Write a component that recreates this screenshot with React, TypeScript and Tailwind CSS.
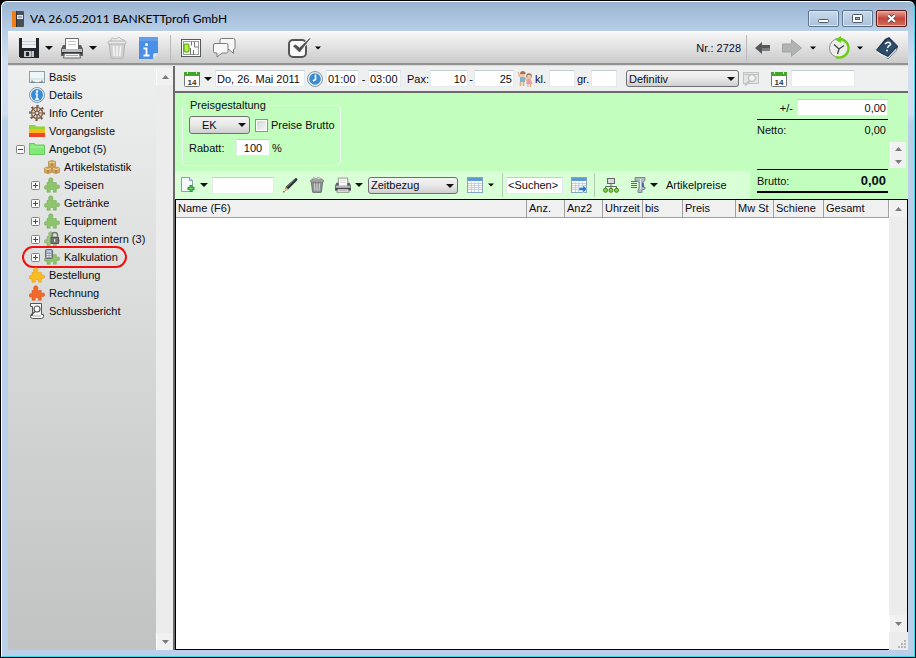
import React from 'react';

interface IconProps {
  className?: string;
}

interface TreeItem {
  label: string;
  icon: React.ReactNode;
  level: number;
  toggle?: 'plus' | 'minus';
  marked?: boolean;
}

const Caret: React.FC<IconProps> = ({ className = '' }) => (
  <svg className={`w-2 h-1 shrink-0 ${className}`} viewBox="0 0 8 4" aria-hidden="true">
    <path d="M0 0h8L4 4z" fill="#111" />
  </svg>
);

const SmallCaret: React.FC<IconProps> = ({ className = '' }) => (
  <svg className={`w-1.5 h-1 shrink-0 ${className}`} viewBox="0 0 6 4" aria-hidden="true">
    <path d="M0 .5h6L3 3.500z" fill="#000" />
  </svg>
);

const AppIcon = () => (
  <svg className="w-3 h-4 shrink-0" viewBox="0 0 12 16">
    <rect width="12" height="16" rx="1" fill="#4b4f55" />
    <rect width="4" height="16" fill="#f07d1a" />
    <rect x="4" width="1" height="16" fill="#2f3135" />
    <rect x="5" y="4" width="6" height="4" fill="#dfe8f2" />
    <path d="M6 6h4" stroke="#5b6b7d" />
  </svg>
);

const SaveIcon = () => (
  <svg className="w-5 h-5 shrink-0" viewBox="0 0 20 20">
    <path d="M0 0h20v20H1.500L0 18.500z" fill="#23272c" />
    <rect x="3" y="0" width="14" height="10" fill="#eef1f4" />
    <path d="M3 3.500h14M3 6.500h14" stroke="#c9ced3" />
    <rect x="5" y="13" width="10" height="6" fill="#c3c7cb" />
    <rect x="7" y="14" width="3" height="4" fill="#23272c" />
    <path d="M12.500 13v6" stroke="#888" />
  </svg>
);

const PrinterIcon: React.FC<IconProps> = ({ className = 'w-[22px] h-[22px]' }) => (
  <svg className={`shrink-0 ${className}`} viewBox="0 0 22 22">
    <path d="M4.500 12V1.500h13V12" fill="#fff" stroke="#6c6c6c" />
    <path d="M7 4.500h8M7 7.500h8" stroke="#c8c8c8" />
    <path d="M2 8h3v4h12V8h3l2 4v7H0v-7z" fill="#5b5f62" />
    <path d="M1 12h20v3H1z" fill="#b9bcbe" />
    <path d="M1 15h20v2H1z" fill="#35383b" />
    <path d="M3.500 16.500h15l1 4.500h-17z" fill="#f1f1f1" stroke="#666" />
    <path d="M5 18.500h12" stroke="#aaa" />
  </svg>
);

const TrashIcon: React.FC<IconProps & { dark?: boolean }> = ({ className = '', dark = false }) => (
  <svg className={`shrink-0 ${className}`} viewBox="0 0 20 22">
    <path d="M3 4l2-3 4 1 3-2 2 2 3 1 1 3z" fill={dark ? '#d5d5d5' : '#ececec'} stroke={dark ? '#888' : '#bbb'} />
    <path d="M2 6h16l-2 15q-6 2-12 0z" fill={dark ? '#8d9092' : '#d2d2d2'} stroke={dark ? '#5e6163' : '#b2b2b2'} />
    <path d="M6.500 9l.7 10M10 9v10M13.500 9l-.7 10" stroke={dark ? '#d4d4d4' : '#f6f6f6'} strokeWidth="1.500" />
    <rect x="1" y="4" width="18" height="3" rx="1.500" fill={dark ? '#b9bbbc' : '#e6e6e6'} stroke={dark ? '#666' : '#b5b5b5'} />
  </svg>
);

const NoteInfoIcon = () => (
  <svg className="w-5 h-[22px] shrink-0" viewBox="0 0 20 22">
    <path d="M0 0h19v16l-5 6H0z" fill="#4a8ee6" />
    <path d="M0 0h19v4H0z" fill="#5f9fee" />
    <path d="M19 16l-5 6 .5-5.500z" fill="#f0f4fa" />
    <circle cx="7.500" cy="7.500" r="1.500" fill="#fff" />
    <path d="M4.500 11.500h3V18M4.500 18.500h6" stroke="#fff" strokeWidth="1.800" fill="none" />
  </svg>
);

const BoardIcon = () => (
  <svg className="w-5 h-[18px] shrink-0" viewBox="0 0 20 18">
    <rect x=".5" y=".5" width="19" height="17" fill="#fff" stroke="#55595a" />
    <rect x="2.500" y="2.500" width="15" height="13" fill="none" stroke="#9a9d9e" />
    <path d="M10.500 2.500v4M13.500 3v5h4M12.500 11v5M9.500 9v7" stroke="#777" fill="none" />
    <rect x="3" y="5" width="5" height="8" rx="1" fill="#b5f04a" stroke="#4f9c08" />
  </svg>
);

const BubblesIcon = () => (
  <svg className="w-[23px] h-5 shrink-0" viewBox="0 0 23 20" fill="#f7f7f7" stroke="#7d7d7d">
    <path d="M8.500.5h12q1.500 0 1.500 1.500v8q0 1.500-1.500 1.500v4L16 11.500H8.500Q7 11.500 7 10V2Q7 .5 8.500.5z" />
    <path d="M2 5.500h11.500q1.500 0 1.500 1.500v6.500q0 1.500-1.500 1.500H9l-5 4v-4H2q-1.500 0-1.500-1.500V7Q.5 5.500 2 5.500z" />
  </svg>
);

const CheckIcon = () => (
  <svg className="w-[23px] h-5 shrink-0" viewBox="0 0 23 20" fill="none">
    <rect x="1" y="2" width="17" height="17" rx="4" fill="#fafafa" stroke="#555" strokeWidth="2" />
    <path d="M22 .5L11.500 14 5.500 8.500l2-1.500 4 3.500z" fill="#505050" stroke="#f4f4f4" strokeWidth="2.400" />
    <path d="M22 .5L11.500 14 5.500 8l2-1 4 3z" fill="#505050" stroke="#505050" strokeWidth=".8" />
  </svg>
);

const BackIcon = () => (
  <svg className="w-[15px] h-3 shrink-0" viewBox="0 0 15 12">
    <path d="M0 6l7-6v3h8v6H7v3z" fill="#55585a" />
    <path d="M7 6h8v3H7z" fill="#7d8082" />
  </svg>
);

const ForwardIcon = () => (
  <svg className="w-5 h-[18px] shrink-0" viewBox="0 0 20 18">
    <path d="M.5 5h9V.8L19.500 9l-10 8.200V13h-9z" fill="#b2b3b4" stroke="#a2a3a4" />
  </svg>
);

const HistoryIcon = () => (
  <svg className="w-[23px] h-[23px] shrink-0" viewBox="0 0 23 23" fill="none">
    <circle cx="11" cy="12" r="9.500" fill="#ededed" stroke="#8d8d8d" />
    <path d="M6 8.500l5 4.500 5-3.500M11 13l-1.500 5" stroke="#444" strokeWidth="1.300" />
    <path d="M12 3a9.300 9.300 0 1 1-4 18" stroke="#6cce16" strokeWidth="2.400" />
    <path d="M7 3.500L13 0v7z" fill="#6cce16" />
  </svg>
);

const HelpBookIcon = () => (
  <svg className="w-[22px] h-[22px] shrink-0" viewBox="0 0 22 22">
    <path d="M0 13L9 2l4-2 9 9-1 4-9 9z" fill="#1b3148" />
    <path d="M1.500 15L12 20l8.500-9v2L12 21.500 1 16z" fill="#e7edf2" />
    <path d="M1 13L12 1l9 8-9.500 10z" fill="#2d4c6a" />
    <path d="M9 7q3-3 5-1 1.500 2-1.500 3L11.500 11" stroke="#fff" strokeWidth="1.500" fill="none" />
    <circle cx="11" cy="13.500" r="1" fill="#fff" />
  </svg>
);

const CalendarIcon = () => (
  <svg className="w-4 h-4 shrink-0" viewBox="0 0 16 16">
    <rect x=".5" y="1.500" width="15" height="14" rx="1" fill="#fff" stroke="#777" />
    <path d="M0 1h16v4H0z" fill="#43a52b" />
    <path d="M3.500 0v3M12.500 0v3" stroke="#d8ecd2" />
    <text x="8" y="13.500" textAnchor="middle" fontSize="8" fontWeight="bold" fontFamily="Liberation Sans, sans-serif" fill="#333">14</text>
  </svg>
);

const ClockIcon = () => (
  <svg className="w-4 h-4 shrink-0" viewBox="0 0 16 16">
    <circle cx="8" cy="8" r="7.500" fill="#e8eef4" stroke="#8c98a4" />
    <circle cx="8" cy="8" r="5.800" fill="#3b8bd3" />
    <path d="M8.500 3.500v5L6 10" stroke="#fff" strokeWidth="1.600" fill="none" />
  </svg>
);

const ChildrenIcon = () => (
  <svg className="w-4 h-4 shrink-0" viewBox="0 0 16 16">
    <path d="M1 1l2 5M8 7l2 3" stroke="#e5b592" strokeWidth="1.500" />
    <circle cx="5.500" cy="3.500" r="2.500" fill="#efc7a4" />
    <path d="M3 3q0-3 3-3 3 .5 2.500 3z" fill="#9c7355" />
    <path d="M3 6h5v5H3z" fill="#7fb4c9" />
    <path d="M3.500 11v4M6.500 11v4" stroke="#d9a67f" strokeWidth="1.500" />
    <circle cx="12" cy="5" r="2.800" fill="#a4714f" />
    <circle cx="12" cy="5.800" r="2" fill="#f2cbaa" />
    <path d="M10.500 8h3l2 5h-6.500z" fill="#ec9aa4" />
    <path d="M11 13v3M13.500 13v3" stroke="#d9a67f" />
  </svg>
);

const PreviewIcon = () => (
  <svg className="w-4 h-[15px] shrink-0" viewBox="0 0 16 15" fill="none" stroke="#bfc2c3">
    <rect x=".5" y="1.500" width="15" height="11" fill="#e4e6e6" />
    <path d="M0 3.500h16" />
    <circle cx="9" cy="7" r="3.500" fill="#f2f2f2" strokeWidth="1.500" />
    <path d="M6.500 10L2 14.500" strokeWidth="2" />
  </svg>
);

const NewPageIcon = () => (
  <svg className="w-3.5 h-4 shrink-0" viewBox="0 0 14 16">
    <path d="M.5.5h8l3 3v11H.5z" fill="#f8fbfd" stroke="#8aa0ad" />
    <path d="M8.500.5v3h3" fill="#dfe9ef" stroke="#8aa0ad" />
    <path d="M10 8v7M6.500 11.500h7" stroke="#1f9b2b" strokeWidth="3" />
    <path d="M10 9v5M7.500 11.500h5" stroke="#6bd25f" />
  </svg>
);

const PencilIcon = () => (
  <svg className="w-4 h-4 shrink-0" viewBox="0 0 16 16">
    <path d="M2 13l1-3.500L12 1.500q1-1 2 0 1 1 0 2L5.500 12z" fill="#2d3033" />
    <path d="M1 15l2-5 2.500 2.500z" fill="#d3b58c" />
    <path d="M4 10l8-7.500" stroke="#777b7f" />
    <path d="M0 15.500l2-.5-1.300-1z" fill="#111" />
  </svg>
);

const GridIcon: React.FC<{ arrow?: boolean }> = ({ arrow = false }) => (
  <svg className="w-4 h-4 shrink-0" viewBox="0 0 16 16">
    <rect x=".5" y=".5" width="15" height="15" fill="#fff" stroke="#8aa4bb" />
    <path d="M1 1h14v3H1z" fill="#5e9ad2" />
    <path d="M1 6.500h14M1 8.500h14M1 10.500h14M1 12.500h14M4.500 5v10M7.500 5v10M11.500 5v10" stroke="#c3d3df" />
    {arrow && <path d="M8 10.500h4V8l4 4-4 4v-2.500H8z" fill="#2b79c9" stroke="#e2eefa" strokeWidth=".5" />}
  </svg>
);

const HierarchyIcon = () => (
  <svg className="w-4 h-[15px] shrink-0" viewBox="0 0 16 15">
    <rect x="4.500" y=".5" width="7" height="5" fill="#d7dadb" stroke="#666" />
    <path d="M8 6v5M2.500 11V8.500h11V11" stroke="#666" fill="none" />
    <g fill="#8bd64f" stroke="#3b7c1c">
      <circle cx="2.500" cy="12.300" r="2" />
      <circle cx="8" cy="12.300" r="2" />
      <circle cx="13.500" cy="12.300" r="2" />
    </g>
  </svg>
);

const CaliperIcon = () => (
  <svg className="w-4 h-4 shrink-0" viewBox="0 0 16 16">
    <path d="M1 4.500h6M1 6.500h6M1 8.500h6M1 10.500h6" stroke="#444" strokeWidth=".8" />
    <path d="M5 .5h10v3l-2 1.500v5h2v2l-3 1v2.500H8V13l1-2V5L5 3.500z" fill="#b3bac2" stroke="#6c7580" strokeWidth=".8" />
    <path d="M10.500 2v10" stroke="#e7ebef" />
    <path d="M12 5.500l2 1v3l-2 1z" fill="#3f6ca8" />
  </svg>
);

const BasisIcon = () => (
  <svg className="w-4 h-3 shrink-0" viewBox="0 0 16 12">
    <rect x=".5" y=".5" width="15" height="11" fill="#eef6f7" stroke="#8ba2a8" />
    <path d="M1 8h14" stroke="#c5dadd" />
    <path d="M3 11.500V9.500M5 11.500v-1M11 11.500v-1M13 11.500V9.500" stroke="#3b4a4e" />
  </svg>
);

const InfoIcon = () => (
  <svg className="w-4 h-4 shrink-0" viewBox="0 0 16 16">
    <circle cx="8" cy="8" r="7.500" fill="#edf3f8" stroke="#8094a5" />
    <circle cx="8" cy="8" r="6" fill="#3b8cd6" />
    <circle cx="8" cy="4.500" r="1.200" fill="#fff" />
    <path d="M6.500 7H8v5M6 12.300h4" stroke="#fff" strokeWidth="1.500" fill="none" />
  </svg>
);

const WheelIcon = () => (
  <svg className="w-4 h-4 shrink-0" viewBox="0 0 16 16" fill="none" stroke="#6c4b35">
    <path d="M8 0v16M0 8h16M2.300 2.300l11.400 11.400M13.700 2.300L2.300 13.700" strokeWidth="1.200" />
    <circle cx="8" cy="8" r="5.500" stroke="#8a6850" strokeWidth="1.500" />
    <circle cx="8" cy="8" r="2" fill="#e8dccf" />
    <circle cx="8" cy="8" r="7.200" strokeDasharray="1.600 4.050" strokeWidth="1.500" />
  </svg>
);

const ListFolderIcon = () => (
  <svg className="w-4 h-3 shrink-0" viewBox="0 0 16 12">
    <path d="M0 0h6l1 1.500h9V5H0z" fill="#8fd636" />
    <path d="M0 4h16v4H0z" fill="#fdb813" />
    <path d="M0 8h16v4H0z" fill="#ee4623" />
  </svg>
);

const FolderIcon = () => (
  <svg className="w-4 h-3 shrink-0" viewBox="0 0 16 12">
    <path d="M.5.5h5l1 1.500h9v9.500H.5z" fill="#82e878" stroke="#66c95d" />
    <path d="M1 4h14" stroke="#a9f5a1" />
  </svg>
);

const BoxesIcon = () => (
  <svg className="w-4 h-3.5 shrink-0" viewBox="0 0 16 14">
    <g fill="#d5a55c" stroke="#b0823e" strokeWidth=".7">
      <path d="M4.500 1.500L8 .5l3.500 1v5L8 7.500l-3.500-1z" />
      <path d="M.5 8l3.500-1 3.500 1v4.500L4 13.500l-3.500-1z" />
      <path d="M8.500 8L12 7l3.500 1v4.500l-3.500 1-3.500-1z" />
    </g>
    <path d="M5 2l3 1 3-1M1 8.500l3 1 3-1M9 8.500l3 1 3-1" stroke="#f1d39c" fill="none" />
    <path d="M8 3.500v2.500M4 10v2.500M12 10v2.500" stroke="#8c6228" />
  </svg>
);

const puzzlePath =
  'M3 5.500h2.200C4 3.500 4.600.8 6.800.8s2.800 2.700 1.600 4.700h3.900v3c1.400-1 3.400-.8 3.400 1.200s-2 2.300-3.400 1.300v4.200h-3c.6-1.600 0-2.800-1.500-2.800s-2.100 1.200-1.400 2.800H3v-3.600C1.800 12.600.3 12.300.3 10.400S2 8.100 3 9.200z';

const PuzzleIcon: React.FC<{ color: string; edge: string; badge?: 'lock' | 'calc' }> = ({ color, edge, badge }) => (
  <svg className="w-4 h-4 shrink-0" viewBox="0 0 16 16">
    <path d={puzzlePath} fill={color} stroke={edge} strokeWidth=".5" />
    {badge === 'lock' && (
      <g>
        <path d="M8 6.500V4q0-2.500 2.700-2.500T13.500 4v2.500" fill="none" stroke="#777" strokeWidth="1.500" />
        <rect x="7" y="6.500" width="7.500" height="6" fill="#747474" stroke="#5a5a5a" />
        <path d="M10.700 8v3" stroke="#ddd" strokeWidth="1.200" />
      </g>
    )}
    {badge === 'calc' && (
      <g>
        <rect x="1.500" y=".5" width="7" height="9" rx="1" fill="#9aa1ab" stroke="#6a717c" />
        <path d="M3 2.500h4" stroke="#b9d5f5" strokeWidth="2" />
        <path d="M3 5.500h4M3 7.500h4" stroke="#eee" strokeDasharray="1 .5" />
      </g>
    )}
  </svg>
);

const ReportIcon = () => (
  <svg className="w-4 h-4 shrink-0" viewBox="0 0 16 16" fill="none" stroke="#555">
    <path d="M1.500.5h11v11h2v2q0 2-2 2H3.500q-2 0-2-2v-1h2v-9h-2z" fill="#f8f8f8" />
    <path d="M4 13h8" stroke="#aaa" />
    <circle cx="8" cy="6" r="3" fill="#fff" strokeWidth="1.200" />
    <path d="M6 8.500L2 12" strokeWidth="1.600" />
  </svg>
);

const greenPiece = <PuzzleIcon color="#8cc56a" edge="#6da34f" />;

const treeItems: TreeItem[] = [
  { label: 'Basis', icon: <BasisIcon />, level: 0 },
  { label: 'Details', icon: <InfoIcon />, level: 0 },
  { label: 'Info Center', icon: <WheelIcon />, level: 0 },
  { label: 'Vorgangsliste', icon: <ListFolderIcon />, level: 0 },
  { label: 'Angebot (5)', icon: <FolderIcon />, level: 0, toggle: 'minus' },
  { label: 'Artikelstatistik', icon: <BoxesIcon />, level: 1 },
  { label: 'Speisen', icon: greenPiece, level: 1, toggle: 'plus' },
  { label: 'Getränke', icon: greenPiece, level: 1, toggle: 'plus' },
  { label: 'Equipment', icon: greenPiece, level: 1, toggle: 'plus' },
  { label: 'Kosten intern (3)', icon: <PuzzleIcon color="#9cc583" edge="#7da768" badge="lock" />, level: 1, toggle: 'plus' },
  { label: 'Kalkulation', icon: <PuzzleIcon color="#8cc56a" edge="#6da34f" badge="calc" />, level: 1, toggle: 'plus', marked: true },
  { label: 'Bestellung', icon: <PuzzleIcon color="#fbbb22" edge="#dc9a0c" />, level: 0 },
  { label: 'Rechnung', icon: <PuzzleIcon color="#f2692c" edge="#cf4f18" />, level: 0 },
  { label: 'Schlussbericht', icon: <ReportIcon />, level: 0 },
];

const columns = [
  { label: 'Name (F6)', width: '' },
  { label: 'Anz.', width: 'w-[38px]' },
  { label: 'Anz2', width: 'w-[38px]' },
  { label: 'Uhrzeit', width: 'w-10' },
  { label: 'bis', width: 'w-10' },
  { label: 'Preis', width: 'w-[53px]' },
  { label: 'Mw St', width: 'w-[38px]' },
  { label: 'Schiene', width: 'w-[50px]' },
  { label: 'Gesamt', width: 'w-[65px]' },
];

interface FieldProps {
  id?: string;
  label?: string;
  value?: string;
  className?: string;
}

const Field: React.FC<FieldProps> = ({ id, label, value = '', className = '' }) => (
  <input
    id={id}
    type="text"
    aria-label={label}
    defaultValue={value}
    className={`h-[17px] shrink-0 bg-white border border-[#e3e9ef] border-t-[#c5ccd2] px-px outline-none ${className}`}
  />
);

const Dropdown: React.FC<FieldProps & { indent?: string }> = ({ label, value, indent = 'pl-0.5', className = 'h-[17px]' }) => (
  <div className={`relative shrink-0 ${className}`}>
    <select
      aria-label={label}
      className={`block w-full h-full appearance-none rounded-[3px] border border-[#707070] bg-linear-to-b from-[#f4f4f4] via-[#e8e8e8] to-[#cfcfcf] outline-none ${indent}`}
    >
      <option>{value}</option>
    </select>
    <Caret className="absolute right-1 top-[7px] pointer-events-none" />
  </div>
);

const IconButton: React.FC<{ label: string; className?: string; children: React.ReactNode }> = ({ label, className = '', children }) => (
  <button type="button" aria-label={label} className={`flex items-center shrink-0 ${className}`}>
    {children}
  </button>
);

const ScrollButton: React.FC<{ up?: boolean; className?: string }> = ({ up = false, className = 'h-[17px]' }) => (
  <button
    type="button"
    aria-label={up ? 'Nach oben' : 'Nach unten'}
    className={`w-full flex items-center justify-center border-l border-white bg-[#f1f1f1] ${className}`}
  >
    <svg className="w-[7px] h-1" viewBox="0 0 7 4">
      <path d={up ? 'M0 4h7L3.500 0z' : 'M0 0h7L3.500 4z'} fill="#7b7b7b" />
    </svg>
  </button>
);

const TreeToggle: React.FC<{ kind: 'plus' | 'minus' }> = ({ kind }) => (
  <button type="button" aria-label={kind === 'plus' ? 'Aufklappen' : 'Zuklappen'} className="block">
    <svg className="w-[9px] h-[9px]" viewBox="0 0 9 9">
      <rect x=".5" y=".5" width="8" height="8" rx="1" fill="#fbfbfb" stroke="#848484" />
      <path d={kind === 'plus' ? 'M2 4.500h5M4.500 2v5' : 'M2 4.500h5'} stroke="#2c4c9c" />
    </svg>
  </button>
);

const TitleBar = () => (
  <header className="h-[29px] shrink-0 flex items-center pl-1 pt-1 gap-1.5">
    <AppIcon />
    <h1 className="flex-1 font-[Lato,'Open_Sans',sans-serif] text-[12px] leading-4 text-black">VA 26.05.2011 BANKETTprofi GmbH</h1>
    <div className="flex gap-[3px] pr-px">
      <button type="button" aria-label="Minimieren" className="w-[31px] h-[17px] flex items-center justify-center rounded-[2px] border border-[#5d7690] bg-linear-to-b from-[#c9d9ea] to-[#a9c1da] shadow-[inset_0_0_0_1px_#dbe7f3]">
        <svg className="w-[11px] h-1 mt-1" viewBox="0 0 11 4">
          <rect x=".5" y=".5" width="10" height="3" rx="1" fill="#fff" stroke="#4d5966" />
        </svg>
      </button>
      <button type="button" aria-label="Maximieren" className="w-[31px] h-[17px] flex items-center justify-center rounded-[2px] border border-[#5d7690] bg-linear-to-b from-[#c9d9ea] to-[#a9c1da] shadow-[inset_0_0_0_1px_#dbe7f3]">
        <svg className="w-[11px] h-[9px]" viewBox="0 0 11 9">
          <rect x=".5" y=".5" width="10" height="8" rx="1" fill="#fff" stroke="#4d5966" />
          <rect x="3.500" y="3.500" width="4" height="2" fill="#9db5d0" stroke="#4d5966" />
        </svg>
      </button>
      <button type="button" aria-label="Schließen" className="w-[31px] h-[17px] flex items-center justify-center rounded-[2px] border border-[#5a1a1a] bg-linear-to-b from-[#e3a294] via-[#c4453a] to-[#d2705a] shadow-[inset_0_0_0_1px_#e9b5aa]">
        <svg className="w-[11px] h-[9px]" viewBox="0 0 11 9">
          <path d="M2 1.200l7 6.600M9 1.200L2 7.800" stroke="#57424a" strokeWidth="3.800" />
          <path d="M2 1.200l7 6.600M9 1.200L2 7.800" stroke="#fff" strokeWidth="2.200" />
        </svg>
      </button>
    </div>
  </header>
);

const MainToolbar = () => (
  <div className="shrink-0 flex flex-col">
    <div className="h-8 flex items-center border-t border-white bg-linear-to-b from-[#f7f7f7] to-[#cbcbcb] pl-[11px] pr-2.5">
      <IconButton label="Speichern"><SaveIcon /></IconButton>
      <IconButton label="Speichern Optionen" className="ml-1.5"><Caret /></IconButton>
      <IconButton label="Drucken" className="ml-2"><PrinterIcon /></IconButton>
      <IconButton label="Drucken Optionen" className="ml-1.5"><Caret /></IconButton>
      <IconButton label="Löschen" className="ml-2.5"><TrashIcon className="w-5 h-[22px]" /></IconButton>
      <IconButton label="Info" className="ml-3"><NoteInfoIcon /></IconButton>
      <div className="w-px h-[26px] ml-[11px] bg-[#b9b9b9]" />
      <IconButton label="Raumplan" className="ml-2.5"><BoardIcon /></IconButton>
      <IconButton label="Kommentare" className="ml-3"><BubblesIcon /></IconButton>
      <IconButton label="Aufgaben" className="ml-[52px]"><CheckIcon /></IconButton>
      <IconButton label="Aufgaben Optionen" className="ml-1"><SmallCaret /></IconButton>
      <span className="ml-auto mr-[5px]">Nr.: 2728</span>
      <div className="w-px h-[26px] bg-[#b9b9b9]" />
      <IconButton label="Zurück" className="ml-2"><BackIcon /></IconButton>
      <IconButton label="Vor" className="ml-3"><ForwardIcon /></IconButton>
      <IconButton label="Verlauf" className="ml-2"><SmallCaret /></IconButton>
      <IconButton label="Wiedervorlage" className="ml-3"><HistoryIcon /></IconButton>
      <IconButton label="Wiedervorlage Optionen" className="ml-1.5"><SmallCaret /></IconButton>
      <IconButton label="Hilfe" className="ml-[13px]"><HelpBookIcon /></IconButton>
    </div>
    <div className="h-[3px] border-b border-[#dcdcdc] bg-[#929292]" />
  </div>
);

const Sidebar = () => (
  <aside className="w-[165px] shrink-0 flex">
    <nav className="flex-1 bg-linear-to-b from-[#edf0ef] via-[#d5d8d6] to-[#c1c3c2] pt-0.5">
      <ul>
        {treeItems.map((item) => (
          <li key={item.label} className={`relative flex items-center h-[18px] ${item.level ? 'pl-[23px]' : 'pl-2'}`}>
            <div className="w-[13px] shrink-0">{item.toggle && <TreeToggle kind={item.toggle} />}</div>
            {item.icon}
            <a href="#" className="ml-1 whitespace-nowrap">{item.label}</a>
            {item.marked && (
              <span className="absolute left-3.5 -top-0.5 w-[105px] h-[22px] rounded-full border-2 border-[#ee1111] pointer-events-none" />
            )}
          </li>
        ))}
      </ul>
    </nav>
    <div className="w-[17px] flex flex-col justify-between bg-[#ececec] pt-0.5">
      <ScrollButton up />
      <ScrollButton />
    </div>
  </aside>
);

const EventBar = () => (
  <div className="h-[27px] shrink-0 flex items-center bg-[#eeefef] border-b-2 border-[#6b6b6b] pl-[9px]">
    <IconButton label="Kalender"><CalendarIcon /></IconButton>
    <Caret className="ml-1" />
    <Field label="Datum" value="Do, 26. Mai 2011" className="w-[90px] ml-[3px]" />
    <IconButton label="Uhrzeit" className="ml-0.5"><ClockIcon /></IconButton>
    <Field label="Beginn" value="01:00" className="w-[33px] ml-[3px]" />
    <span className="w-[9px] text-center">-</span>
    <Field label="Ende" value="03:00" className="w-[33px]" />
    <label htmlFor="pax" className="ml-1.5 w-[23px]">Pax:</label>
    <Field id="pax" value="10" className="w-[38px] text-right" />
    <span className="w-1.5 text-center">-</span>
    <Field label="Pax bis" value="25" className="w-10 text-right" />
    <span className="ml-[3px]"><ChildrenIcon /></span>
    <label htmlFor="small" className="ml-0.5 w-3.5">kl.</label>
    <Field id="small" className="w-[26px]" />
    <label htmlFor="large" className="ml-0.5 w-3.5">gr.</label>
    <Field id="large" className="w-[26px]" />
    <Dropdown label="Status" value="Definitiv" className="w-[113px] h-[17px] ml-[9px]" />
    <IconButton label="Vorschau" className="ml-1"><PreviewIcon /></IconButton>
    <IconButton label="Optionsdatum wählen" className="ml-3"><CalendarIcon /></IconButton>
    <Field label="Optionsdatum" className="w-16 ml-1" />
  </div>
);

const PriceOptions = () => (
  <div className="h-[78px] pl-[7px] pt-1.5">
    <fieldset className="w-[159px] h-[67px] rounded-[4px] border border-[#ecf3f2] pl-1.5">
      <legend className="px-px leading-3">Preisgestaltung</legend>
      <div className="flex items-center mt-[5px]">
        <Dropdown label="Preisart" value="EK" className="w-[61px] h-[18px]" indent="pl-3" />
        <input id="gross" type="checkbox" className="appearance-none ml-[5px] w-[13px] h-[13px] border border-[#8e8f8f] bg-linear-to-br from-[#cfd3d6] to-[#f8f8f8] shadow-[inset_0_0_0_1px_#fff]" />
        <label htmlFor="gross" className="ml-[3px] whitespace-nowrap">Preise Brutto</label>
      </div>
      <div className="flex items-center mt-[5px]">
        <label htmlFor="discount" className="w-[47px]">Rabatt:</label>
        <Field id="discount" value="100" className="w-[34px] text-center" />
        <span className="ml-0.5">%</span>
      </div>
    </fieldset>
  </div>
);

const ItemToolbar = () => (
  <div className="h-7 flex items-center bg-[#d9ffd7] pl-1.5">
    <IconButton label="Neu"><NewPageIcon /></IconButton>
    <Caret className="ml-[5px]" />
    <Field label="Artikel" className="w-[62px] ml-1" />
    <IconButton label="Bearbeiten" className="ml-[9px]"><PencilIcon /></IconButton>
    <IconButton label="Position löschen" className="ml-2.5"><TrashIcon dark className="w-4 h-4" /></IconButton>
    <IconButton label="Liste drucken" className="ml-2.5"><PrinterIcon className="w-4 h-4" /></IconButton>
    <Caret className="ml-1" />
    <Dropdown label="Zeitbezug" value="Zeitbezug" className="w-[90px] h-[17px] ml-[5px]" />
    <IconButton label="Ansicht" className="ml-[9px]"><GridIcon /></IconButton>
    <SmallCaret className="ml-[5px]" />
    <div className="w-px h-6 ml-2 bg-[#b3c9b3]" />
    <Field label="Suche" value="<Suchen>" className="w-[57px] ml-[3px]" />
    <IconButton label="Suchen" className="ml-2"><GridIcon arrow /></IconButton>
    <div className="w-px h-6 ml-[7px] bg-[#b3c9b3]" />
    <IconButton label="Struktur" className="ml-2"><HierarchyIcon /></IconButton>
    <IconButton label="Werkzeuge" className="ml-[11px]"><CaliperIcon /></IconButton>
    <Caret className="ml-1" />
    <button type="button" className="ml-2">Artikelpreise</button>
  </div>
);

const Totals = () => (
  <div className="w-[158px] shrink-0 flex pl-[7px] pt-1.5">
    <div className="w-[131px] flex flex-col">
      <div className="flex items-center">
        <label htmlFor="adjust" className="flex-1 text-right pr-1">+/-</label>
        <Field id="adjust" value="0,00" className="w-[91px] text-right" />
      </div>
      <div className="flex justify-between mt-[3px] border-t border-black pt-[3px] pr-0.5">
        <span>Netto:</span>
        <span>0,00</span>
      </div>
      <div className="mt-auto mb-1.5 h-6 flex items-center justify-between border-t border-b-2 border-black pr-0.5">
        <span>Brutto:</span>
        <strong className="text-[13px]">0,00</strong>
      </div>
    </div>
    <div className="w-4 ml-0.5 pt-[43px]">
      <ScrollButton up className="h-[13px]" />
      <ScrollButton className="h-[13px]" />
    </div>
  </div>
);

const ItemTable = () => (
  <div className="flex-1 min-h-0 flex border-t border-black bg-white">
    <div className="flex-1 border-l border-b border-black">
      <table className="w-full table-fixed border-collapse">
        <thead>
          <tr className="h-[17px] bg-[#f0f0f0]">
            {columns.map((col) => (
              <th key={col.label} scope="col" className={`border-r border-b border-[#a0a0a0] p-0 pl-0.5 text-left font-normal whitespace-nowrap ${col.width}`}>
                {col.label}
              </th>
            ))}
          </tr>
        </thead>
        <tbody />
      </table>
    </div>
    <div className="w-[19px] flex flex-col">
      <div className="flex-1 flex flex-col justify-between border-r border-black bg-[#ececec]">
        <ScrollButton up />
        <ScrollButton />
      </div>
      <div className="h-[18px] flex items-end justify-end bg-[#ececec] p-0.5">
        <svg className="w-2 h-2" viewBox="0 0 8 8" fill="#b5b5b5">
          <path d="M6 0h2v2H6zM3 3h2v2H3zM6 3h2v2H6zM0 6h2v2H0zM3 6h2v2H3zM6 6h2v2H6z" />
        </svg>
      </div>
    </div>
  </div>
);

export default function App() {
  return (
    <div className="h-screen bg-black p-px">
      <div className="h-full flex flex-col rounded-t-[6px] border border-t-white border-l-white border-r-[#3fd6ec] border-b-[#3fd6ec] bg-[linear-gradient(#9ab4d1_0px,#b8cfe8_29px,#d2e0f1_60px,#cfdef0_112px,#bad0e9_120px)] px-1.5 pb-1.5 font-['Liberation_Sans',Arial,sans-serif] text-[11px] leading-[14px] text-[#0c0c14]">
        <TitleBar />
        <MainToolbar />
        <div className="flex-1 min-h-0 flex">
          <Sidebar />
          <main className="flex-1 min-w-0 flex flex-col border-l-2 border-[#6b6b6b]">
            <EventBar />
            <div className="h-[106px] shrink-0 flex bg-[#c2ffbe]">
              <div className="flex-1 min-w-0">
                <PriceOptions />
                <ItemToolbar />
              </div>
              <Totals />
            </div>
            <ItemTable />
          </main>
        </div>
      </div>
    </div>
  );
}
